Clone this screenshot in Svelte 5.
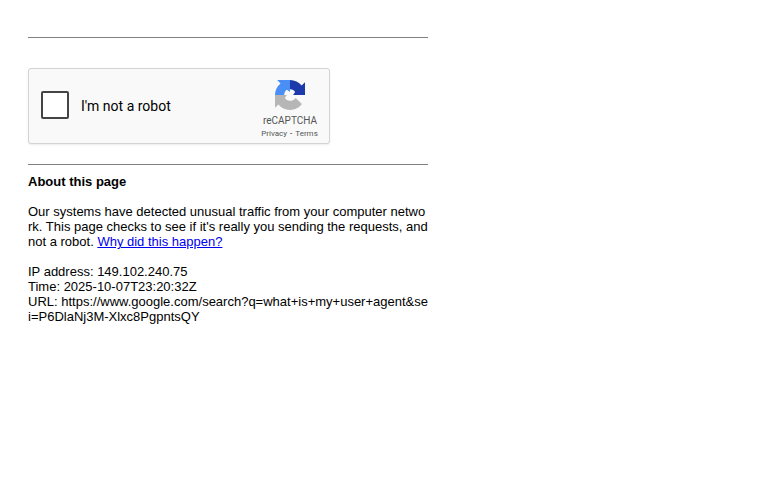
<script>
  const requestInfo = [
    ['IP address', '149.102.240.75'],
    ['Time', '2025-10-07T23:20:32Z'],
    ['URL', 'https://www.google.com/search?q=what+is+my+user+agent&sei=P6DlaNj3M-Xlxc8PgpntsQY']
  ];
  let checked = $state(false);
</script>

<main>
  <hr />
  <section class="captcha">
    <button class="box" role="checkbox" aria-checked={checked} aria-label="I'm not a robot" onclick={() => (checked = !checked)}></button>
    <span class="label">I'm not a robot</span>
    <div class="brand">
      <svg viewBox="0 0 64 64" width="30" height="30" aria-hidden="true">
        <path fill="#1c3aa9" d="M64 32V4.7l-7.2 7.1C51 4.7 42 .1 32 .1V19.500c5.500 .2 9 2.500 11 6L38.500 32z" />
        <path fill="#4a8ff6" d="M32 0H4.600l7.200 7.200C4.600 13.100 0 22.100 0 32h19.500c.2-5 2.500-9 6-11L32 25.500z" />
        <path fill="#b6b6b6" d="M0 32v27.300l7.200-7.100C13 59.400 22 63.900 32 63.900c10.400 0 19.600-5 25.400-12.600L44 38.500c-2.500 4-6.500 6-12 6c-5-.2-9-2.500-11-6L25.500 32z" />
      </svg>
      <span class="name">reCAPTCHA</span>
      <div class="links"><span>Privacy</span><span class="dash">-</span><span>Terms</span></div>
    </div>
  </section>
  <hr />
  <h1>About this page</h1>
  <p>
    Our systems have detected unusual traffic from your computer network. This page checks to see if it's really you sending the requests, and not a robot. <a href="#why">Why did this happen?</a>
  </p>
  <div class="info">
    {#each requestInfo as [key, value]}
      <div>{key}: {value}</div>
    {/each}
  </div>
</main>

<style>
  :global(body) {
    background: #fff;
  }
  main {
    box-sizing: border-box;
    width: 428px;
    padding: 37px 0 0 28px;
    font: 13px/15px "Liberation Sans", Arial, sans-serif;
    color: #000;
    word-break: break-all;
  }
  hr {
    height: 1px;
    margin: 0;
    border: 0;
    background: #808080;
  }
  .captcha {
    display: flex;
    align-items: center;
    box-sizing: border-box;
    width: 302px;
    height: 76px;
    margin: 30px 0 20px;
    padding-left: 12px;
    border: 1px solid #d3d3d3;
    border-radius: 3px;
    background: #f9f9f9;
    box-shadow: 0 1px 2px rgba(0, 0, 0, 0.08);
    font-family: Roboto, sans-serif;
    white-space: nowrap;
  }
  .box {
    box-sizing: border-box;
    width: 28px;
    height: 28px;
    margin: 0 12px 2px 0;
    padding: 0;
    border: 2px solid #444;
    border-radius: 2px;
    background: #fff;
  }
  .label {
    font-size: 14px;
    line-height: 17px;
  }
  .brand {
    display: flex;
    flex-direction: column;
    align-items: center;
    align-self: flex-start;
    width: 70px;
    margin: 11px 4px 0 auto;
    color: #555;
  }
  .name {
    margin-top: 5px;
    font-size: 10px;
    line-height: 12px;
  }
  .links {
    display: flex;
    margin: 2px 1px 0 0;
    font-size: 8px;
    line-height: 10px;
  }
  .dash {
    margin: 0 3px;
    color: #000;
  }
  h1 {
    margin: 9px 0 15px;
    font-size: 13px;
    line-height: 15px;
  }
  p {
    margin: 0 0 15px;
  }
  a {
    color: #00e;
  }
</style>
